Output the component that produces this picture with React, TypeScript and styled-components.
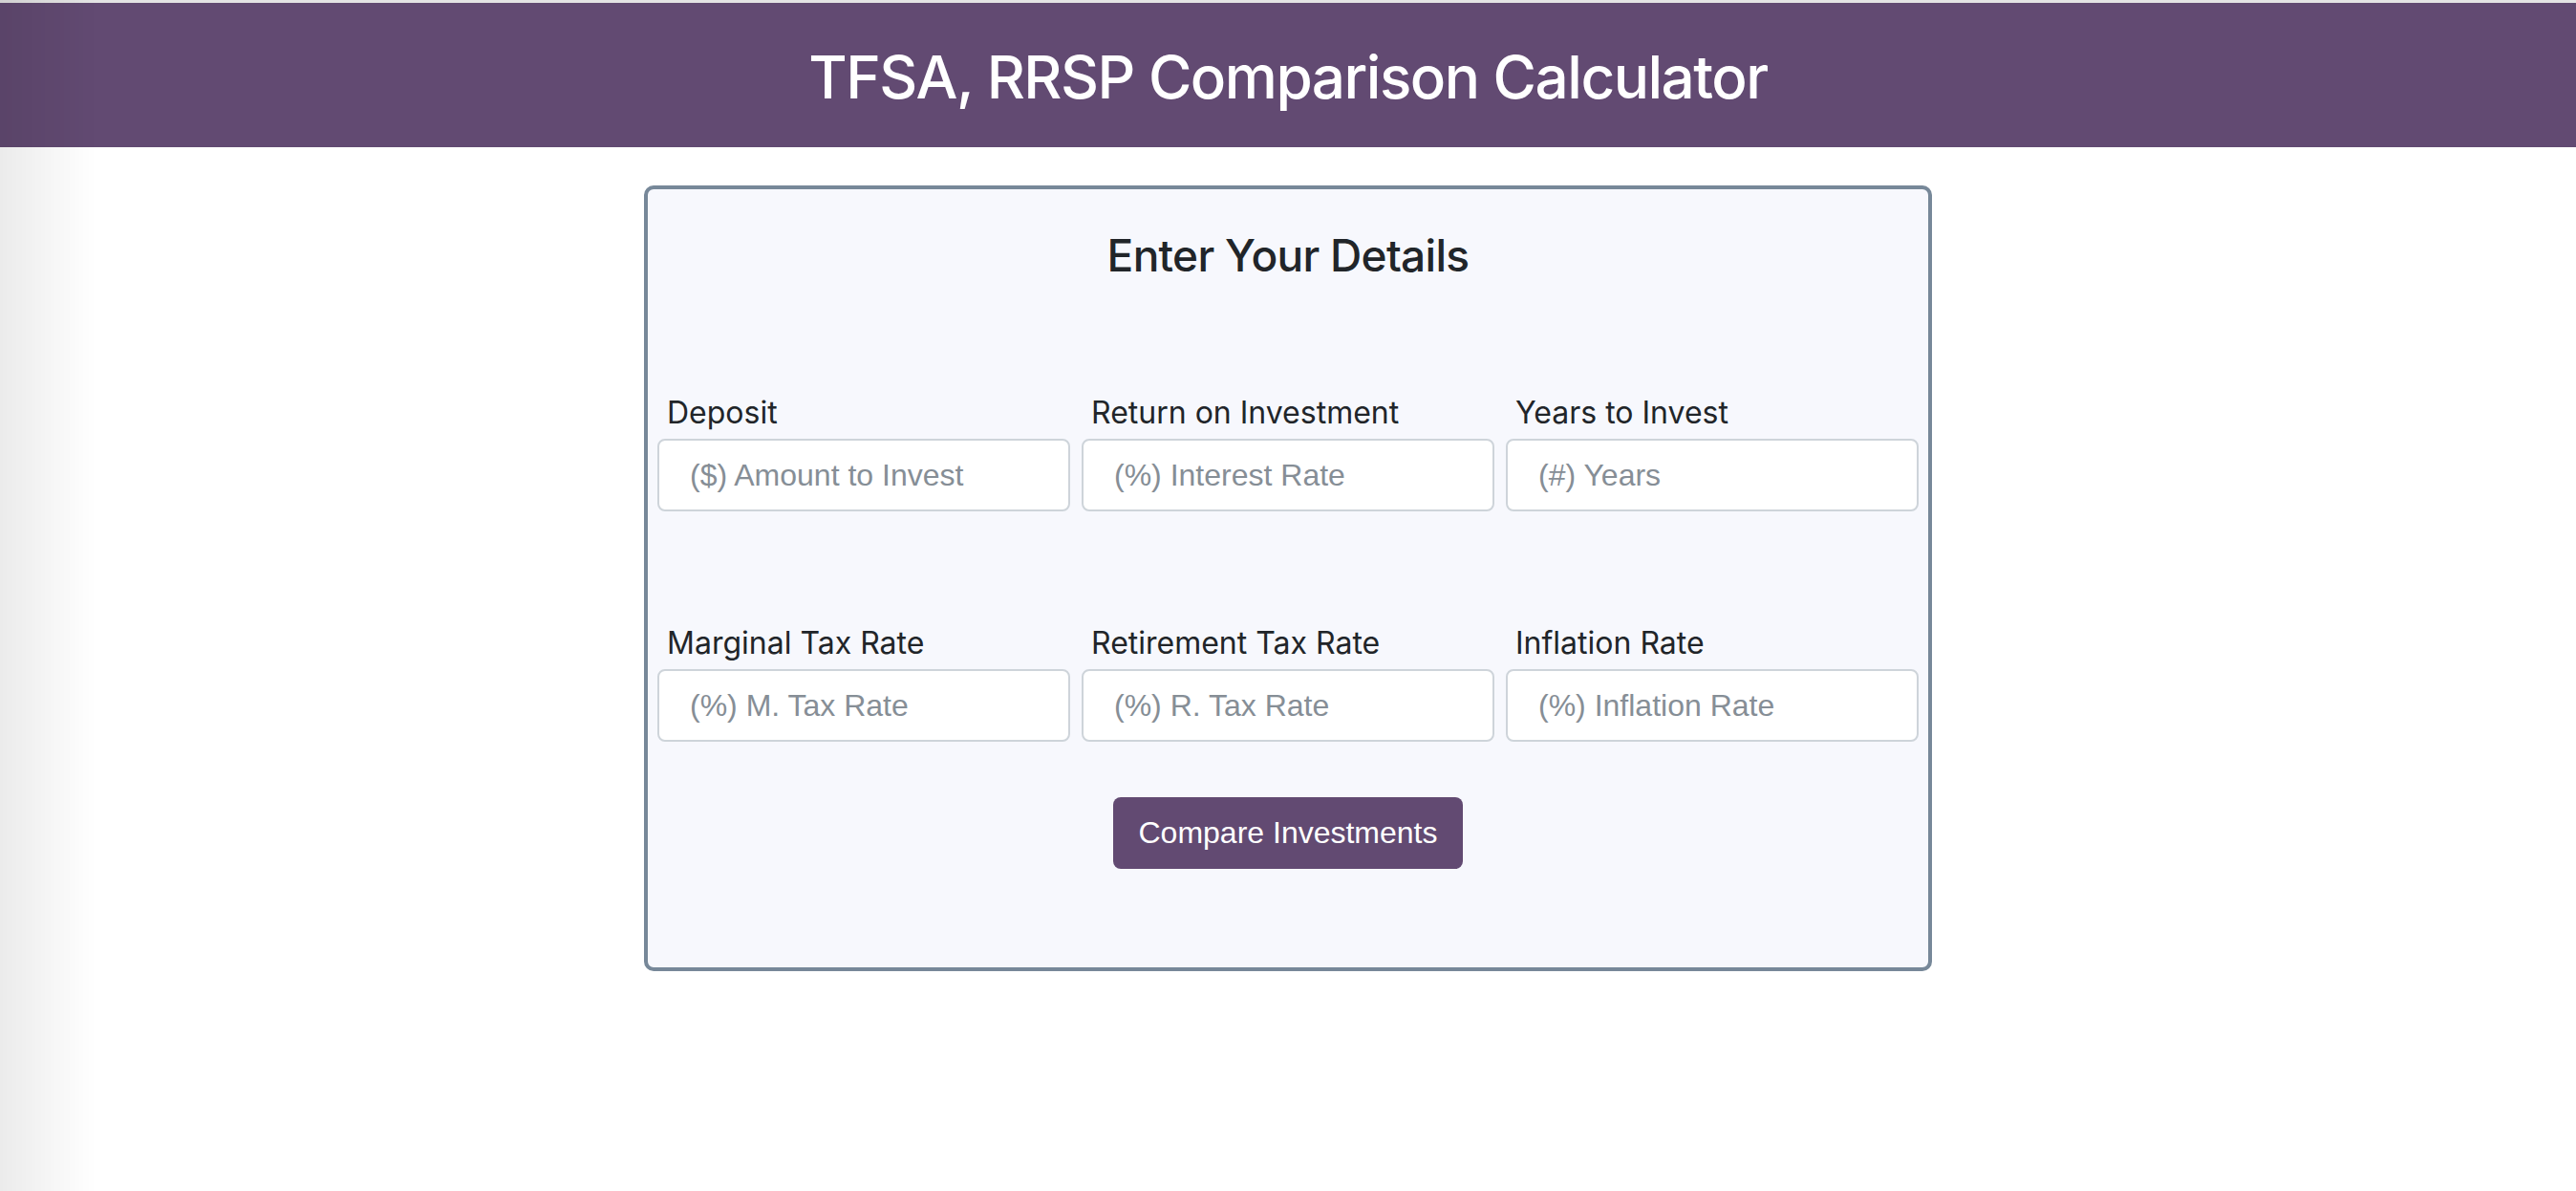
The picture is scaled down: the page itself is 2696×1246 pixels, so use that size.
import React from 'react';
import styled, { createGlobalStyle } from 'styled-components';

const GlobalStyle = createGlobalStyle`
  html, body {
    margin: 0;
    padding: 0;
    background: #ffffff;
  }
  body {
    font-family: Inter, "Liberation Sans", sans-serif;
    color: #212529;
  }
  * {
    box-sizing: border-box;
  }
`;

type FieldDef = {
  label: string;
  placeholder: string;
};

const fields: FieldDef[] = [
  { label: 'Deposit', placeholder: '($) Amount to Invest' },
  { label: 'Return on Investment', placeholder: '(%) Interest Rate' },
  { label: 'Years to Invest', placeholder: '(#) Years' },
  { label: 'Marginal Tax Rate', placeholder: '(%) M. Tax Rate' },
  { label: 'Retirement Tax Rate', placeholder: '(%) R. Tax Rate' },
  { label: 'Inflation Rate', placeholder: '(%) Inflation Rate' },
];

const App = () => {
  return (
    <Page>
      <GlobalStyle />
      <Header>
        <Title>TFSA, RRSP Comparison Calculator</Title>
      </Header>
      <Card onSubmit={(e) => e.preventDefault()}>
        <Heading>Enter Your Details</Heading>
        <FieldGrid>
          {fields.map((f) => (
            <Field key={f.label}>
              <Label>{f.label}</Label>
              <Input type="text" placeholder={f.placeholder} />
            </Field>
          ))}
        </FieldGrid>
        <Actions>
          <SubmitButton type="submit">Compare Investments</SubmitButton>
        </Actions>
      </Card>
    </Page>
  );
};

export default App;

const Page = styled.div`
  min-height: 100vh;
  border-top: 3px solid #e4e4e4;

  /* soft shade along the left edge of the window */
  &::before {
    content: '';
    position: fixed;
    top: 0;
    left: 0;
    bottom: 0;
    width: 100px;
    pointer-events: none;
    background: linear-gradient(to right, rgba(0, 0, 0, 0.08), rgba(0, 0, 0, 0));
  }
`;

const Header = styled.header`
  background: #624a72;
  padding: 39px 0 35px;
  text-align: center;
`;

const Title = styled.h1`
  margin: 0;
  color: #ffffff;
  font-family: Inter, sans-serif;
  font-size: 62px;
  font-weight: 500;
  line-height: 77px;
  letter-spacing: -1.5px;
`;

const Card = styled.form`
  width: 50%;
  margin: 40px auto 0;
  background: #f7f8fd;
  border: 4px solid #778899;
  border-radius: 10px;
  padding: 40px 10px 103px;
`;

const Heading = styled.h2`
  margin: 0;
  text-align: center;
  font-family: Inter, sans-serif;
  font-size: 46px;
  font-weight: 500;
  line-height: 58px;
  color: #212529;
  letter-spacing: -0.7px;
`;

const FieldGrid = styled.div`
  display: grid;
  grid-template-columns: repeat(3, 1fr);
  column-gap: 12px;
  row-gap: 114px;
  margin-top: 112px;
`;

const Field = styled.div`
  display: flex;
  flex-direction: column;
`;

const Label = styled.label`
  font-family: Inter, sans-serif;
  font-size: 32px;
  line-height: 48px;
  padding-left: 10px;
  margin-bottom: 3px;
  color: #212529;
`;

const Input = styled.input`
  height: 76px;
  width: 100%;
  padding: 0 30px 0 32px;
  border: 2px solid #ced4da;
  border-radius: 8px;
  background: #ffffff;
  font-family: "Liberation Sans", Arial, sans-serif;
  font-size: 32px;
  color: #495057;

  &::placeholder {
    color: #868e96;
  }
`;

const Actions = styled.div`
  display: flex;
  justify-content: center;
  margin-top: 58px;
`;

const SubmitButton = styled.button`
  background: #624a72;
  color: #ffffff;
  border: none;
  border-radius: 8px;
  padding: 13px 26px;
  font-family: "Liberation Sans", Arial, sans-serif;
  font-size: 32px;
  line-height: 49px;
  cursor: pointer;
`;
